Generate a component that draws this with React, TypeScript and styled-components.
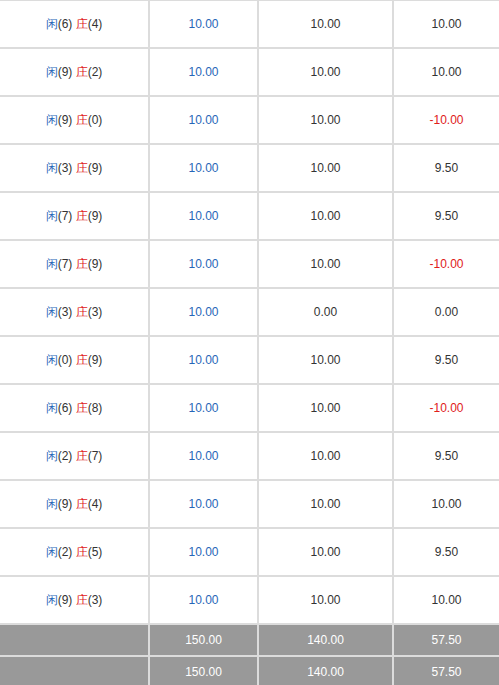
import React from "react";
import styled, { createGlobalStyle } from "styled-components";

const Global = createGlobalStyle`
  html, body { margin: 0; padding: 0; background: #fff; }
  body { font-family: "Liberation Sans", Arial, sans-serif; font-size: 12px; }
`;

const Table = styled.div`
  display: grid;
  grid-template-columns: 148px 107px 133px 105px;
  column-gap: 2px;
  row-gap: 2px;
  background: #dcdcdc;
  padding-top: 1px;
  width: 499px;
`;

const Cell = styled.div<{ $total?: boolean }>`
  height: ${(p) => (p.$total ? "30px" : "46px")};
  display: flex;
  align-items: center;
  justify-content: center;
  background: ${(p) => (p.$total ? "#999999" : "#ffffff")};
  color: ${(p) => (p.$total ? "#ffffff" : "#333333")};
  font-size: 12px;
  white-space: pre;
`;

const Blue = styled.span`
  color: #2766b8;
`;
const Red = styled.span`
  color: #e0201a;
`;

type Row = { p: number; b: number; bet: string; valid: string; win: string };

const rows: Row[] = [
  { p: 6, b: 4, bet: "10.00", valid: "10.00", win: "10.00" },
  { p: 9, b: 2, bet: "10.00", valid: "10.00", win: "10.00" },
  { p: 9, b: 0, bet: "10.00", valid: "10.00", win: "-10.00" },
  { p: 3, b: 9, bet: "10.00", valid: "10.00", win: "9.50" },
  { p: 7, b: 9, bet: "10.00", valid: "10.00", win: "9.50" },
  { p: 7, b: 9, bet: "10.00", valid: "10.00", win: "-10.00" },
  { p: 3, b: 3, bet: "10.00", valid: "0.00", win: "0.00" },
  { p: 0, b: 9, bet: "10.00", valid: "10.00", win: "9.50" },
  { p: 6, b: 8, bet: "10.00", valid: "10.00", win: "-10.00" },
  { p: 2, b: 7, bet: "10.00", valid: "10.00", win: "9.50" },
  { p: 9, b: 4, bet: "10.00", valid: "10.00", win: "10.00" },
  { p: 2, b: 5, bet: "10.00", valid: "10.00", win: "9.50" },
  { p: 9, b: 3, bet: "10.00", valid: "10.00", win: "10.00" },
];

const totals = ["150.00", "140.00", "57.50"];

export default function App() {
  return (
    <>
      <Global />
      <Table>
        {rows.map((r, i) => (
          <React.Fragment key={i}>
            <Cell>
              <Blue>闲</Blue>({r.p}) <Red>庄</Red>({r.b})
            </Cell>
            <Cell>
              <Blue>{r.bet}</Blue>
            </Cell>
            <Cell>{r.valid}</Cell>
            <Cell>{r.win.startsWith("-") ? <Red>{r.win}</Red> : r.win}</Cell>
          </React.Fragment>
        ))}
        {[0, 1].map((k) => (
          <React.Fragment key={`t${k}`}>
            <Cell $total />
            {totals.map((t, j) => (
              <Cell $total key={j}>
                {t}
              </Cell>
            ))}
          </React.Fragment>
        ))}
      </Table>
    </>
  );
}
